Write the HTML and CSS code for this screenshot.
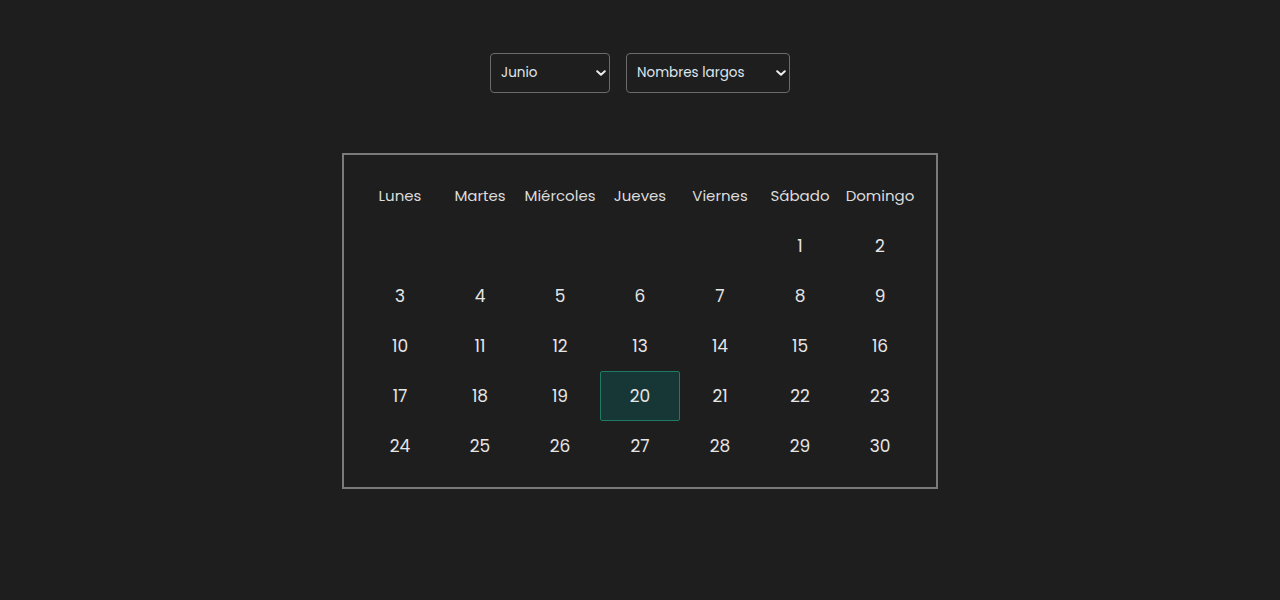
FILE: index.html
```html
<!DOCTYPE html>
<html lang="es">
<head>
<meta charset="utf-8">
<link rel="stylesheet" href="styles.css">
</head>
<body>
<main class="page">
  <div class="controls">
    <div class="select-wrap month">
      <select class="select"><option>Junio</option></select>
      <svg class="chev" viewBox="0 0 10 6" width="10" height="6"><path d="M1.2 1.2l3.8 3.6 3.8-3.6" fill="none" stroke="#ececec" stroke-width="2" stroke-linecap="round" stroke-linejoin="round"/></svg>
    </div>
    <div class="select-wrap names">
      <select class="select"><option>Nombres largos</option></select>
      <svg class="chev" viewBox="0 0 10 6" width="10" height="6"><path d="M1.2 1.2l3.8 3.6 3.8-3.6" fill="none" stroke="#ececec" stroke-width="2" stroke-linecap="round" stroke-linejoin="round"/></svg>
    </div>
  </div>
  <section class="calendar">
    <div class="cell head">Lunes</div>
    <div class="cell head">Martes</div>
    <div class="cell head">Miércoles</div>
    <div class="cell head">Jueves</div>
    <div class="cell head">Viernes</div>
    <div class="cell head">Sábado</div>
    <div class="cell head">Domingo</div>
    <div class="cell"></div><div class="cell"></div><div class="cell"></div><div class="cell"></div><div class="cell"></div>
    <div class="cell day">1</div><div class="cell day">2</div>
    <div class="cell day">3</div><div class="cell day">4</div><div class="cell day">5</div><div class="cell day">6</div><div class="cell day">7</div><div class="cell day">8</div><div class="cell day">9</div>
    <div class="cell day">10</div><div class="cell day">11</div><div class="cell day">12</div><div class="cell day">13</div><div class="cell day">14</div><div class="cell day">15</div><div class="cell day">16</div>
    <div class="cell day">17</div><div class="cell day">18</div><div class="cell day">19</div><div class="cell day today">20</div><div class="cell day">21</div><div class="cell day">22</div><div class="cell day">23</div>
    <div class="cell day">24</div><div class="cell day">25</div><div class="cell day">26</div><div class="cell day">27</div><div class="cell day">28</div><div class="cell day">29</div><div class="cell day">30</div>
  </section>
</main>
</body>
</html>
```
FILE: styles.css
```css
html, body {
  margin: 0;
  padding: 0;
  background: #1e1e1e;
  height: 100%;
}
body {
  font-family: "Poppins", "Inter", "Noto Sans", sans-serif;
  color: #e4e4e4;
}
.page {
  display: flex;
  flex-direction: column;
  align-items: center;
  padding-top: 53px;
}
.controls {
  display: flex;
  gap: 16px;
}
.select-wrap {
  position: relative;
  height: 40px;
}
.select-wrap.month { width: 120px; }
.select-wrap.names { width: 164px; }
.select {
  appearance: none;
  -webkit-appearance: none;
  width: 100%;
  height: 40px;
  box-sizing: border-box;
  background: #1e1e1e;
  color: #dfe6ee;
  border: 1px solid #6b6b6b;
  border-radius: 4px;
  font-family: inherit;
  font-size: 13.5px;
  padding: 0 0 2px 10px;
  outline: none;
}
.chev {
  position: absolute;
  right: 4px;
  top: 17px;
  pointer-events: none;
}
.calendar {
  margin-top: 60px;
  display: grid;
  grid-template-columns: repeat(7, 80px);
  grid-auto-rows: 50px;
  padding: 16px;
  border: 2px solid #7a7a7a;
}
.cell {
  display: flex;
  align-items: center;
  justify-content: center;
  box-sizing: border-box;
}
.head {
  font-size: 15px;
  color: #dcdcdc;
  padding-bottom: 2px;
}
.day {
  font-size: 17px;
  color: #e6e6e6;
}
.today {
  background: #173636;
  border: 1px solid #1e7a62;
  border-radius: 2px;
}
```
